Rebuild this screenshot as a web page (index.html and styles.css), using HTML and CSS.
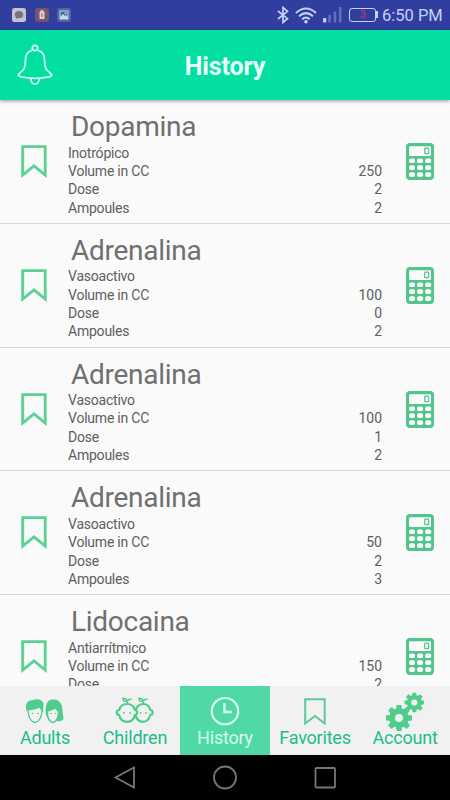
FILE: index.html
```html
<!DOCTYPE html>
<html lang="en">
<head>
<meta charset="utf-8">
<title>History</title>
<link rel="stylesheet" href="styles.css">
</head>
<body>
<svg class="defs" width="0" height="0">
  <symbol id="bookmark" viewBox="0 0 26 33"><path d="M1.7 1.6H24.2V30L13 20.8L1.7 30Z" fill="none" stroke="currentColor" stroke-width="2.9"/></symbol>
  <symbol id="calc" viewBox="0 0 28 37">
    <rect width="28" height="37" rx="4" fill="currentColor"/>
    <rect x="3" y="3.2" width="22" height="9.8" rx="1.2" fill="#fafafa"/>
    <rect x="18.7" y="5.1" width="4" height="5.6" rx=".6" fill="none" stroke="currentColor" stroke-width="1.2"/>
    <g fill="#fafafa">
      <rect x="3" y="15.4" width="6" height="4.7" rx="1.7"/><rect x="11.1" y="15.4" width="6" height="4.7" rx="1.7"/><rect x="19.2" y="15.4" width="6" height="4.7" rx="1.7"/>
      <rect x="3" y="22.3" width="6" height="4.7" rx="1.7"/><rect x="11.1" y="22.3" width="6" height="4.7" rx="1.7"/><rect x="19.2" y="22.3" width="6" height="4.7" rx="1.7"/>
      <rect x="3" y="29.3" width="6" height="4.7" rx="1.7"/><rect x="11.1" y="29.3" width="6" height="4.7" rx="1.7"/><rect x="19.2" y="29.3" width="6" height="4.7" rx="1.7"/>
    </g>
  </symbol>
  <symbol id="gear" viewBox="-12 -12 24 24">
    <g fill="currentColor">
      <path fill-rule="evenodd" d="M0-9A9 9 0 1 1 0 9A9 9 0 1 1 0-9ZM0-3.7A3.7 3.7 0 1 0 0 3.7A3.7 3.7 0 1 0 0-3.7Z"/>
      <path id="tooth" d="M-2.8-8L-2.2-12H2.2L2.8-8Z"/>
      <use href="#tooth" transform="rotate(45)"/><use href="#tooth" transform="rotate(90)"/><use href="#tooth" transform="rotate(135)"/><use href="#tooth" transform="rotate(180)"/><use href="#tooth" transform="rotate(225)"/><use href="#tooth" transform="rotate(270)"/><use href="#tooth" transform="rotate(315)"/>
    </g>
  </symbol>
</svg>
<div class="screen">
  <header class="status">
    <div class="notices">
      <svg width="14" height="14" viewBox="0 0 14 14"><rect width="14" height="14" rx="2.5" fill="#c5c3cf"/><ellipse cx="7" cy="6.7" rx="4.2" ry="3.6" fill="#72777f"/><path d="M4 8L4 11L7 9Z" fill="#72777f"/></svg>
      <svg width="14" height="14" viewBox="0 0 14 14"><rect width="14" height="14" rx="2.5" fill="#79526b"/><path d="M5.5 2.3h3v1.5h1v7.2h-5V3.8h1Z" fill="#ddd3dc"/><path d="M6.5 5.2h1v3.8h-1z" fill="#79526b"/></svg>
      <svg width="14" height="14" viewBox="0 0 14 14"><rect width="14" height="14" rx="2.5" fill="#4a68a4"/><rect x="3" y="3" width="8" height="8" fill="#456197" stroke="#c7d7ec"/><path d="M3 9l3-3 2 2 1-1 2 2v2H3z" fill="#c7d7ec"/><circle cx="8.5" cy="5.2" r="1" fill="#c7d7ec"/></svg>
    </div>
    <div class="system">
      <svg width="12" height="18" viewBox="0 0 12 18"><path d="M1 5L10.5 12.7L6 16.5V1.5L10.5 5.3L1 13" fill="none" stroke="#c9d0f6" stroke-width="1.7"/></svg>
      <svg class="wifi" width="22" height="17" viewBox="0 0 22 17"><g fill="none" stroke="#c9d0f6" stroke-width="2"><path d="M1 6Q11-3 21 6"/><path d="M4 9.3Q11 3 18 9.3"/><path d="M7.2 12.3Q11 8.6 14.8 12.3"/></g><circle cx="11" cy="14.7" r="1.8" fill="#c9d0f6"/></svg>
      <svg class="signal" width="19" height="16" viewBox="0 0 19 16"><rect x="0" y="11" width="3.3" height="4.5" rx="1" fill="#c9d0f6"/><g fill="#6470c0"><rect x="5.3" y="8" width="2.5" height="7.5"/><rect x="10.7" y="4.5" width="2.5" height="11"/><rect x="16" y="0" width="2.5" height="15.5"/></g></svg>
      <span class="battery">3</span>
      <span class="clock">6:50 PM</span>
    </div>
  </header>
  <div class="appbar">
    <svg class="bell" width="36" height="42" viewBox="0 0 36 42"><g fill="none" stroke="#d4fff4" stroke-width="1.8"><circle cx="18" cy="4" r="2.7"/><path d="M14.8 6.3C10.5 7.7 8.5 11 8.5 15.5C8.5 23 7.5 26 2.3 29.5C.5 31 1.5 32.2 4 32.9Q18 35.8 32 32.9C34.5 32.2 35.5 31 33.7 29.5C28.5 26 27.5 23 27.5 15.5C27.5 11 25.5 7.7 21.2 6.3"/><path d="M13.8 34.5C13.8 42 22.2 42 22.2 34.5"/></g></svg>
    <h1>History</h1>
  </div>
  <main class="list">
    <article class="item">
      <svg class="mark"><use href="#bookmark"/></svg>
      <div class="info"><h2>Dopamina</h2><p>Inotrópico</p><p>Volume in CC<b>250</b></p><p>Dose<b>2</b></p><p>Ampoules<b>2</b></p></div>
      <svg class="calc"><use href="#calc"/></svg>
    </article>
    <article class="item">
      <svg class="mark"><use href="#bookmark"/></svg>
      <div class="info"><h2>Adrenalina</h2><p>Vasoactivo</p><p>Volume in CC<b>100</b></p><p>Dose<b>0</b></p><p>Ampoules<b>2</b></p></div>
      <svg class="calc"><use href="#calc"/></svg>
    </article>
    <article class="item">
      <svg class="mark"><use href="#bookmark"/></svg>
      <div class="info"><h2>Adrenalina</h2><p>Vasoactivo</p><p>Volume in CC<b>100</b></p><p>Dose<b>1</b></p><p>Ampoules<b>2</b></p></div>
      <svg class="calc"><use href="#calc"/></svg>
    </article>
    <article class="item">
      <svg class="mark"><use href="#bookmark"/></svg>
      <div class="info"><h2>Adrenalina</h2><p>Vasoactivo</p><p>Volume in CC<b>50</b></p><p>Dose<b>2</b></p><p>Ampoules<b>3</b></p></div>
      <svg class="calc"><use href="#calc"/></svg>
    </article>
    <article class="item">
      <svg class="mark"><use href="#bookmark"/></svg>
      <div class="info"><h2>Lidocaina</h2><p>Antiarrítmico</p><p>Volume in CC<b>150</b></p><p>Dose<b>2</b></p></div>
      <svg class="calc"><use href="#calc"/></svg>
    </article>
  </main>
  <nav class="tabs">
    <a class="tab">
      <svg width="40" height="40" viewBox="0 0 40 40">
        <path d="M21 24C20 16 21 8.5 28 8.5C37 8.5 37.5 16 37.6 21L38.6 28Q36 31 31.5 30H24Z" fill="currentColor"/>
        <path d="M22.5 20Q27 19.5 30.5 16.5Q31.5 19 33.5 20.5C33.5 25 31.5 31 28 31.5C24 31 22 25 22.5 20Z" fill="#f1f1f1" stroke="currentColor" stroke-width="1.3"/>
        <path d="M1.5 20C0 13 2 9 8 9C12 7 18 8.5 18.5 13L18 21Z" fill="currentColor"/>
        <path d="M3 18.5Q11 18.5 14.5 15.5Q15.5 18 17 19C17 25 14.5 31 10 31.5C5.5 31 3 25 3 18.5Z" fill="#f1f1f1" stroke="currentColor" stroke-width="1.3"/>
        <g fill="currentColor"><circle cx="7.5" cy="22.5" r=".8"/><circle cx="13" cy="22.5" r=".8"/><circle cx="26" cy="22.5" r=".8"/><circle cx="30.5" cy="22.5" r=".8"/></g>
      </svg>
      <span>Adults</span>
    </a>
    <a class="tab">
      <svg width="40" height="40" viewBox="0 0 40 40">
        <g fill="#f1f1f1" stroke="currentColor" stroke-width="2.2">
          <path d="M28 13C32 13 34.5 15.5 35.3 19C38.5 19 38.5 24 35.3 24C34 28.5 31.5 30.8 28 30.8C24 30.8 21.5 28 20.5 24C20 16 24 13 28 13Z"/>
          <path d="M12 13C16 13 19 15.5 19.8 19C22.8 19 22.8 24 19.8 24C19 28 16 30.8 12 30.8C8 30.8 5 28 4.2 24C.9 24 .9 19 4.2 19C5 15.5 8 13 12 13Z"/>
          <path d="M28.5 13V10M27.5 10.5Q24 10.5 24 7.2Q27 7.2 28.5 10Q29.5 7.8 32.5 8.3M12.5 13V10M11.5 10.5Q8 10.5 8 7.2Q11 7.2 12.5 10Q13.5 7.8 16.5 8.3" fill="none" stroke-width="1.5"/>
        </g>
        <g fill="currentColor"><circle cx="9" cy="22" r=".9"/><circle cx="15" cy="22" r=".9"/><circle cx="25.5" cy="22" r=".9"/><circle cx="31" cy="22" r=".9"/></g>
      </svg>
      <span>Children</span>
    </a>
    <a class="tab active">
      <svg width="40" height="40" viewBox="0 0 40 40"><circle cx="20" cy="20.2" r="13.2" fill="none" stroke="currentColor" stroke-width="2.2"/><path d="M19.5 12V21H27" fill="none" stroke="currentColor" stroke-width="2.4"/></svg>
      <span>History</span>
    </a>
    <a class="tab">
      <svg width="40" height="40" viewBox="0 0 40 40"><path d="M10.2 8.3H29.7V32.5L20 25L10.2 32.5Z" fill="none" stroke="#5dc99a" stroke-width="2"/></svg>
      <span>Favorites</span>
    </a>
    <a class="tab">
      <svg width="40" height="40" viewBox="0 0 40 40"><use href="#gear" x="1" y="14" width="26" height="26"/><use href="#gear" x="19.3" y="1.5" width="20" height="20"/></svg>
      <span>Account</span>
    </a>
  </nav>
  <footer class="system-nav">
    <svg width="24" height="26" viewBox="0 0 24 26"><path d="M2.500 12.500L21 2.500V22.500Z"/></svg>
    <svg width="24" height="26" viewBox="0 0 24 26"><circle cx="12" cy="12.500" r="11"/></svg>
    <svg width="24" height="26" viewBox="0 0 24 26"><rect x="2.500" y="3" width="19.500" height="19.500" rx="1"/></svg>
  </footer>
</div>
</body>
</html>
```
FILE: styles.css
```css
* { box-sizing: border-box; }
body { margin: 0; font-family: Roboto, "Liberation Sans", sans-serif; }
h1, h2, p { margin: 0; font-weight: 400; }
.defs { position: absolute; }
.screen { width: 450px; height: 800px; display: flex; flex-direction: column; overflow: hidden; background: #fafafa; }
.status { height: 30px; flex: none; display: flex; justify-content: space-between; background: #303f9f; padding: 0 8px 0 12px; }
.notices { display: flex; align-items: center; gap: 8.5px; }
.system { display: flex; align-items: center; color: #c9d0f6; }
.wifi { margin-left: 6px; }
.signal { margin-left: 6px; }
.battery { position: relative; width: 27px; height: 14px; margin-left: 7px; border: 1.5px solid #c9d0f6; border-radius: 3px; color: #cf3350; font-size: 11px; line-height: 12px; text-align: center; }
.battery::after { content: ""; position: absolute; right: -3px; top: 2px; width: 2px; height: 7px; background: #c9d0f6; }
.clock { margin-left: 6px; width: 60px; font-size: 16.5px; white-space: nowrap; }
.appbar { position: relative; z-index: 1; height: 70px; flex: none; display: grid; grid-template-columns: 70px 1fr 70px; align-items: center; background: #02dfa1; box-shadow: 0 1px 4px rgba(0, 0, 0, .4); }
.bell { margin-left: 17px; }
.appbar h1 { color: #eafffb; font-size: 25px; letter-spacing: -.1px; font-weight: 700; text-align: center; line-height: 30px; padding-top: 3px; }
.list { flex: 1; min-height: 0; overflow: hidden; }
.item { height: 123.8px; display: grid; grid-template-columns: 68px 314px 68px; align-items: start; border-bottom: 1px solid #d6d6d6; }
.mark { width: 26px; height: 33px; margin: 45px 0 0 21px; color: #5bd193; }
.calc { width: 28px; height: 37px; margin: 43px 0 0 24px; color: #52c58c; }
.info { padding-top: 9px; color: #5e5e5e; }
.info h2 { height: 34.5px; padding-left: 3px; font-size: 28px; letter-spacing: -.28px; line-height: 35px; color: #707070; }
.info p { display: flex; justify-content: space-between; height: 18.35px; line-height: 18.35px; font-size: 14px; letter-spacing: -.22px; }
.info b { font-weight: 400; letter-spacing: 0; }
.tabs { height: 69px; flex: none; display: grid; grid-template-columns: repeat(5, 1fr); background: #f1f1f1; }
.tab { display: flex; flex-direction: column; align-items: center; padding-top: 5px; color: #4fcd8c; }
.tab span { margin-top: -4px; color: #1bbd8d; font-size: 18px; letter-spacing: -.2px; line-height: 22px; }
.active { background: #50d8a6; color: #d5ffec; }
.active span { color: #d5ffec; }
.system-nav { height: 45px; flex: none; display: flex; justify-content: center; align-items: center; gap: 76px; background: #000; fill: none; stroke: #777; stroke-width: 1.8px; }
```
